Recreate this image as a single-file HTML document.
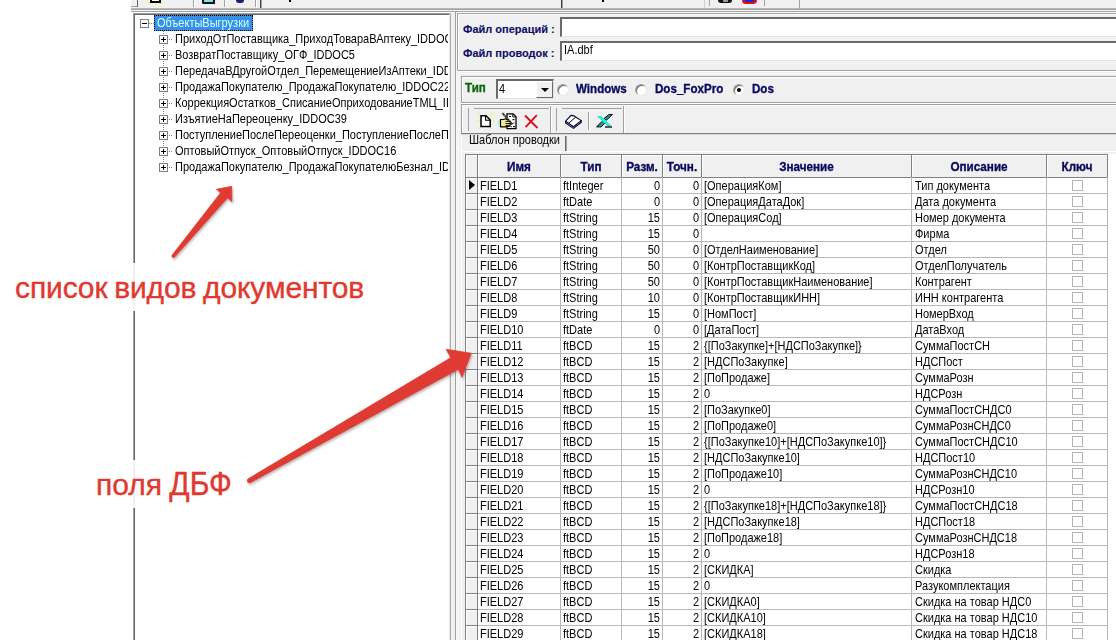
<!DOCTYPE html>
<html><head><meta charset="utf-8"><style>
*{margin:0;padding:0;box-sizing:border-box}
html,body{width:1116px;height:640px;overflow:hidden;background:#fff}
body{position:relative;font-family:"Liberation Sans",sans-serif;font-size:11px;color:#000}
.a{position:absolute}
.t{position:absolute;white-space:nowrap;line-height:16px;height:16px;transform:scaleY(1.1);transform-origin:0 12px}
.hl{position:absolute;height:1px}
.vl{position:absolute;width:1px}
.b{font-weight:bold}
.nv{color:#08085e;-webkit-text-stroke:0.3px #08085e}
</style></head><body>

<div class="a" style="left:131px;top:0;width:985px;height:9px;background:#f0f0f0"></div>
<div class="hl" style="left:131px;top:8px;width:985px;background:#b8b8b8"></div>
<div class="hl" style="left:131px;top:9px;width:985px;background:#a0a0a0"></div>
<div class="hl" style="left:131px;top:10px;width:985px;background:#fafafa"></div>
<div class="hl" style="left:131px;top:11px;width:985px;background:#a0a0a0"></div>
<div class="hl" style="left:131px;top:12px;width:985px;background:#fff"></div>
<div class="vl" style="left:193px;top:0;height:7px;background:#a0a0a0"></div>
<div class="vl" style="left:194px;top:0;height:7px;background:#fff"></div>
<div class="vl" style="left:224px;top:0;height:7px;background:#a0a0a0"></div>
<div class="vl" style="left:225px;top:0;height:7px;background:#fff"></div>
<div class="vl" style="left:255px;top:0;height:7px;background:#a0a0a0"></div>
<div class="vl" style="left:256px;top:0;height:7px;background:#fff"></div>
<div class="hl" style="left:131px;top:6px;width:7px;background:#a0a0a0"></div>
<div class="vl" style="left:260px;top:0;height:8px;background:#404040"></div>
<div class="vl" style="left:261px;top:0;height:8px;background:#a0a0a0"></div>
<div class="vl" style="left:561px;top:0;height:8px;background:#404040"></div>
<div class="vl" style="left:562px;top:0;height:8px;background:#a0a0a0"></div>
<div class="vl" style="left:137px;top:0;height:7px;background:#606060"></div>
<div class="vl" style="left:704px;top:0;height:8px;background:#d0d0d0"></div>
<div class="vl" style="left:709px;top:0;height:6px;background:#a0a0a0"></div>
<div class="vl" style="left:764px;top:0;height:6px;background:#a0a0a0"></div>
<div class="vl" style="left:799px;top:0;height:9px;background:#a0a0a0"></div>
<div class="a" style="left:147px;top:1px;width:16px;height:3px;background:#eef27a;opacity:.7;border-radius:2px"></div>
<div class="a" style="left:150px;top:0;width:11px;height:2.5px;border:2px solid #000;border-top:none;background:#fff"></div>
<div class="a" style="left:202px;top:0;width:13px;height:4px;border:2px solid #111;border-top:none;background:#7fe0e8;border-radius:0 0 1px 2px"></div>
<div class="a" style="left:236px;top:0;width:8px;height:2.5px;background:#1a1a7a;border-radius:0 0 4px 4px"></div>
<div class="a" style="left:289px;top:0;width:2px;height:2px;background:#000"></div>
<div class="a" style="left:602px;top:0;width:2px;height:1.5px;background:#000"></div>
<div class="a" style="left:718px;top:0;width:14px;height:3px;background:#111;border-radius:0 0 3px 3px"></div>
<div class="a" style="left:723px;top:0;width:5px;height:2px;background:#999"></div>
<div class="a" style="left:742px;top:0;width:15px;height:3.5px;background:#e01010;border-radius:0 0 6px 6px"></div>
<div class="a" style="left:745px;top:0;width:9px;height:2px;background:#1a2ad0"></div>
<div class="a" style="left:133px;top:13px;width:318px;height:640px;background:#fff;border-top:1px solid #a0a0a0;border-left:1px solid #a0a0a0"></div>
<div class="hl" style="left:134px;top:14px;width:316px;background:#696969"></div>
<div class="vl" style="left:134px;top:14px;height:640px;background:#696969"></div>
<div class="vl" style="left:449px;top:14px;height:640px;background:#e3e3e3"></div>
<div class="vl" style="left:450px;top:13px;height:640px;background:#b0b0b0"></div>
<div class="a" style="left:135px;top:15px;width:313px;height:630px;overflow:hidden">
<div class="a" style="left:5px;top:4px;width:9px;height:9px;border:1px solid #808080;background:#fff"></div>
<div class="a" style="left:7px;top:8px;width:5px;height:1px;background:#000"></div>
<div class="a" style="left:14px;top:8px;width:1px;height:1px;background:#808080"></div>
<div class="a" style="left:16px;top:8px;width:1px;height:1px;background:#808080"></div>
<div class="a" style="left:18px;top:8px;width:1px;height:1px;background:#808080"></div>
<div class="a" style="left:19px;top:0px;width:99px;height:16px;background:#3590e6;outline:1px dotted #000;outline-offset:-1px"></div>
<div class="t" style="left:22px;top:0px;color:#d4ffff">ОбъектыВыгрузки</div>
<div class="a" style="left:28px;top:16px;width:1px;height:1px;background:#808080"></div>
<div class="a" style="left:28px;top:18px;width:1px;height:1px;background:#808080"></div>
<div class="a" style="left:28px;top:20px;width:1px;height:1px;background:#808080"></div>
<div class="a" style="left:28px;top:22px;width:1px;height:1px;background:#808080"></div>
<div class="a" style="left:28px;top:24px;width:1px;height:1px;background:#808080"></div>
<div class="a" style="left:28px;top:26px;width:1px;height:1px;background:#808080"></div>
<div class="a" style="left:28px;top:28px;width:1px;height:1px;background:#808080"></div>
<div class="a" style="left:28px;top:30px;width:1px;height:1px;background:#808080"></div>
<div class="a" style="left:28px;top:32px;width:1px;height:1px;background:#808080"></div>
<div class="a" style="left:28px;top:34px;width:1px;height:1px;background:#808080"></div>
<div class="a" style="left:28px;top:36px;width:1px;height:1px;background:#808080"></div>
<div class="a" style="left:28px;top:38px;width:1px;height:1px;background:#808080"></div>
<div class="a" style="left:28px;top:40px;width:1px;height:1px;background:#808080"></div>
<div class="a" style="left:28px;top:42px;width:1px;height:1px;background:#808080"></div>
<div class="a" style="left:28px;top:44px;width:1px;height:1px;background:#808080"></div>
<div class="a" style="left:28px;top:46px;width:1px;height:1px;background:#808080"></div>
<div class="a" style="left:28px;top:48px;width:1px;height:1px;background:#808080"></div>
<div class="a" style="left:28px;top:50px;width:1px;height:1px;background:#808080"></div>
<div class="a" style="left:28px;top:52px;width:1px;height:1px;background:#808080"></div>
<div class="a" style="left:28px;top:54px;width:1px;height:1px;background:#808080"></div>
<div class="a" style="left:28px;top:56px;width:1px;height:1px;background:#808080"></div>
<div class="a" style="left:28px;top:58px;width:1px;height:1px;background:#808080"></div>
<div class="a" style="left:28px;top:60px;width:1px;height:1px;background:#808080"></div>
<div class="a" style="left:28px;top:62px;width:1px;height:1px;background:#808080"></div>
<div class="a" style="left:28px;top:64px;width:1px;height:1px;background:#808080"></div>
<div class="a" style="left:28px;top:66px;width:1px;height:1px;background:#808080"></div>
<div class="a" style="left:28px;top:68px;width:1px;height:1px;background:#808080"></div>
<div class="a" style="left:28px;top:70px;width:1px;height:1px;background:#808080"></div>
<div class="a" style="left:28px;top:72px;width:1px;height:1px;background:#808080"></div>
<div class="a" style="left:28px;top:74px;width:1px;height:1px;background:#808080"></div>
<div class="a" style="left:28px;top:76px;width:1px;height:1px;background:#808080"></div>
<div class="a" style="left:28px;top:78px;width:1px;height:1px;background:#808080"></div>
<div class="a" style="left:28px;top:80px;width:1px;height:1px;background:#808080"></div>
<div class="a" style="left:28px;top:82px;width:1px;height:1px;background:#808080"></div>
<div class="a" style="left:28px;top:84px;width:1px;height:1px;background:#808080"></div>
<div class="a" style="left:28px;top:86px;width:1px;height:1px;background:#808080"></div>
<div class="a" style="left:28px;top:88px;width:1px;height:1px;background:#808080"></div>
<div class="a" style="left:28px;top:90px;width:1px;height:1px;background:#808080"></div>
<div class="a" style="left:28px;top:92px;width:1px;height:1px;background:#808080"></div>
<div class="a" style="left:28px;top:94px;width:1px;height:1px;background:#808080"></div>
<div class="a" style="left:28px;top:96px;width:1px;height:1px;background:#808080"></div>
<div class="a" style="left:28px;top:98px;width:1px;height:1px;background:#808080"></div>
<div class="a" style="left:28px;top:100px;width:1px;height:1px;background:#808080"></div>
<div class="a" style="left:28px;top:102px;width:1px;height:1px;background:#808080"></div>
<div class="a" style="left:28px;top:104px;width:1px;height:1px;background:#808080"></div>
<div class="a" style="left:28px;top:106px;width:1px;height:1px;background:#808080"></div>
<div class="a" style="left:28px;top:108px;width:1px;height:1px;background:#808080"></div>
<div class="a" style="left:28px;top:110px;width:1px;height:1px;background:#808080"></div>
<div class="a" style="left:28px;top:112px;width:1px;height:1px;background:#808080"></div>
<div class="a" style="left:28px;top:114px;width:1px;height:1px;background:#808080"></div>
<div class="a" style="left:28px;top:116px;width:1px;height:1px;background:#808080"></div>
<div class="a" style="left:28px;top:118px;width:1px;height:1px;background:#808080"></div>
<div class="a" style="left:28px;top:120px;width:1px;height:1px;background:#808080"></div>
<div class="a" style="left:28px;top:122px;width:1px;height:1px;background:#808080"></div>
<div class="a" style="left:28px;top:124px;width:1px;height:1px;background:#808080"></div>
<div class="a" style="left:28px;top:126px;width:1px;height:1px;background:#808080"></div>
<div class="a" style="left:28px;top:128px;width:1px;height:1px;background:#808080"></div>
<div class="a" style="left:28px;top:130px;width:1px;height:1px;background:#808080"></div>
<div class="a" style="left:28px;top:132px;width:1px;height:1px;background:#808080"></div>
<div class="a" style="left:28px;top:134px;width:1px;height:1px;background:#808080"></div>
<div class="a" style="left:28px;top:136px;width:1px;height:1px;background:#808080"></div>
<div class="a" style="left:28px;top:138px;width:1px;height:1px;background:#808080"></div>
<div class="a" style="left:28px;top:140px;width:1px;height:1px;background:#808080"></div>
<div class="a" style="left:28px;top:142px;width:1px;height:1px;background:#808080"></div>
<div class="a" style="left:28px;top:144px;width:1px;height:1px;background:#808080"></div>
<div class="a" style="left:28px;top:146px;width:1px;height:1px;background:#808080"></div>
<div class="a" style="left:28px;top:148px;width:1px;height:1px;background:#808080"></div>
<div class="a" style="left:28px;top:150px;width:1px;height:1px;background:#808080"></div>
<div class="a" style="left:28px;top:152px;width:1px;height:1px;background:#808080"></div>
<div class="a" style="left:24px;top:20px;width:9px;height:9px;border:1px solid #808080;background:#fff"></div>
<div class="a" style="left:26px;top:24px;width:5px;height:1px;background:#000"></div>
<div class="a" style="left:28px;top:22px;width:1px;height:5px;background:#000"></div>
<div class="a" style="left:34px;top:24px;width:1px;height:1px;background:#808080"></div>
<div class="a" style="left:36px;top:24px;width:1px;height:1px;background:#808080"></div>
<div class="t" style="left:40px;top:16px">ПриходОтПоставщика_ПриходТовараВАптеку_IDDOC1</div>
<div class="a" style="left:24px;top:36px;width:9px;height:9px;border:1px solid #808080;background:#fff"></div>
<div class="a" style="left:26px;top:40px;width:5px;height:1px;background:#000"></div>
<div class="a" style="left:28px;top:38px;width:1px;height:5px;background:#000"></div>
<div class="a" style="left:34px;top:40px;width:1px;height:1px;background:#808080"></div>
<div class="a" style="left:36px;top:40px;width:1px;height:1px;background:#808080"></div>
<div class="t" style="left:40px;top:32px">ВозвратПоставщику_ОГФ_IDDOC5</div>
<div class="a" style="left:24px;top:52px;width:9px;height:9px;border:1px solid #808080;background:#fff"></div>
<div class="a" style="left:26px;top:56px;width:5px;height:1px;background:#000"></div>
<div class="a" style="left:28px;top:54px;width:1px;height:5px;background:#000"></div>
<div class="a" style="left:34px;top:56px;width:1px;height:1px;background:#808080"></div>
<div class="a" style="left:36px;top:56px;width:1px;height:1px;background:#808080"></div>
<div class="t" style="left:40px;top:48px">ПередачаВДругойОтдел_ПеремещениеИзАптеки_IDDOC</div>
<div class="a" style="left:24px;top:68px;width:9px;height:9px;border:1px solid #808080;background:#fff"></div>
<div class="a" style="left:26px;top:72px;width:5px;height:1px;background:#000"></div>
<div class="a" style="left:28px;top:70px;width:1px;height:5px;background:#000"></div>
<div class="a" style="left:34px;top:72px;width:1px;height:1px;background:#808080"></div>
<div class="a" style="left:36px;top:72px;width:1px;height:1px;background:#808080"></div>
<div class="t" style="left:40px;top:64px">ПродажаПокупателю_ПродажаПокупателю_IDDOC22</div>
<div class="a" style="left:24px;top:84px;width:9px;height:9px;border:1px solid #808080;background:#fff"></div>
<div class="a" style="left:26px;top:88px;width:5px;height:1px;background:#000"></div>
<div class="a" style="left:28px;top:86px;width:1px;height:5px;background:#000"></div>
<div class="a" style="left:34px;top:88px;width:1px;height:1px;background:#808080"></div>
<div class="a" style="left:36px;top:88px;width:1px;height:1px;background:#808080"></div>
<div class="t" style="left:40px;top:80px">КоррекцияОстатков_СписаниеОприходованиеТМЦ_IDDOC</div>
<div class="a" style="left:24px;top:100px;width:9px;height:9px;border:1px solid #808080;background:#fff"></div>
<div class="a" style="left:26px;top:104px;width:5px;height:1px;background:#000"></div>
<div class="a" style="left:28px;top:102px;width:1px;height:5px;background:#000"></div>
<div class="a" style="left:34px;top:104px;width:1px;height:1px;background:#808080"></div>
<div class="a" style="left:36px;top:104px;width:1px;height:1px;background:#808080"></div>
<div class="t" style="left:40px;top:96px">ИзъятиеНаПереоценку_IDDOC39</div>
<div class="a" style="left:24px;top:116px;width:9px;height:9px;border:1px solid #808080;background:#fff"></div>
<div class="a" style="left:26px;top:120px;width:5px;height:1px;background:#000"></div>
<div class="a" style="left:28px;top:118px;width:1px;height:5px;background:#000"></div>
<div class="a" style="left:34px;top:120px;width:1px;height:1px;background:#808080"></div>
<div class="a" style="left:36px;top:120px;width:1px;height:1px;background:#808080"></div>
<div class="t" style="left:40px;top:112px">ПоступлениеПослеПереоценки_ПоступлениеПослеПереоценки</div>
<div class="a" style="left:24px;top:132px;width:9px;height:9px;border:1px solid #808080;background:#fff"></div>
<div class="a" style="left:26px;top:136px;width:5px;height:1px;background:#000"></div>
<div class="a" style="left:28px;top:134px;width:1px;height:5px;background:#000"></div>
<div class="a" style="left:34px;top:136px;width:1px;height:1px;background:#808080"></div>
<div class="a" style="left:36px;top:136px;width:1px;height:1px;background:#808080"></div>
<div class="t" style="left:40px;top:128px">ОптовыйОтпуск_ОптовыйОтпуск_IDDOC16</div>
<div class="a" style="left:24px;top:148px;width:9px;height:9px;border:1px solid #808080;background:#fff"></div>
<div class="a" style="left:26px;top:152px;width:5px;height:1px;background:#000"></div>
<div class="a" style="left:28px;top:150px;width:1px;height:5px;background:#000"></div>
<div class="a" style="left:34px;top:152px;width:1px;height:1px;background:#808080"></div>
<div class="a" style="left:36px;top:152px;width:1px;height:1px;background:#808080"></div>
<div class="t" style="left:40px;top:144px">ПродажаПокупателю_ПродажаПокупателюБезнал_IDDOC</div>
</div>
<div class="a" style="left:451px;top:13px;width:665px;height:627px;background:#f0f0f0"></div>
<div class="vl" style="left:455px;top:11px;height:629px;background:#a0a0a0"></div>
<div class="vl" style="left:456px;top:12px;height:628px;background:#fafafa"></div>
<div class="vl" style="left:457px;top:13px;height:58px;background:#a0a0a0"></div>
<div class="hl" style="left:457px;top:13px;width:659px;background:#a0a0a0"></div>
<div class="hl" style="left:458px;top:14px;width:658px;background:#fff"></div>
<div class="vl" style="left:458px;top:14px;height:56px;background:#fff"></div>
<div class="hl" style="left:457px;top:70px;width:659px;background:#a0a0a0"></div>
<div class="hl" style="left:457px;top:71px;width:659px;background:#fff"></div>
<div class="t b" style="left:463px;top:21px;transform:none;color:#0c0c66;-webkit-text-stroke:0.1px #0c0c66">Файл операций :</div>
<div class="t b" style="left:463px;top:45px;transform:none;color:#0c0c66;-webkit-text-stroke:0.1px #0c0c66">Файл проводок :</div>
<div class="a" style="left:560px;top:17px;width:600px;height:20px;background:#fff;border-top:2px solid #6a6a6a;border-left:2px solid #6a6a6a;border-bottom:1px solid #e3e3e3"></div>
<div class="a" style="left:560px;top:41px;width:600px;height:20px;background:#fff;border-top:2px solid #6a6a6a;border-left:2px solid #6a6a6a;border-bottom:1px solid #e3e3e3"></div>
<div class="t" style="left:564px;top:42px">IA.dbf</div>
<div class="hl" style="left:458px;top:73px;width:658px;background:#fafafa"></div>
<div class="vl" style="left:458px;top:73px;height:567px;background:#fafafa"></div>
<div class="hl" style="left:461px;top:76px;width:655px;background:#a0a0a0"></div>
<div class="hl" style="left:462px;top:77px;width:654px;background:#fff"></div>
<div class="vl" style="left:461px;top:76px;height:27px;background:#a0a0a0"></div>
<div class="vl" style="left:462px;top:77px;height:25px;background:#fff"></div>
<div class="hl" style="left:461px;top:102px;width:655px;background:#a0a0a0"></div>
<div class="hl" style="left:461px;top:103px;width:655px;background:#fff"></div>
<div class="t b" style="left:465px;top:80px;color:#0b650b;-webkit-text-stroke:0.3px #0b650b;font-size:11.6px">Тип</div>
<div class="a" style="left:496px;top:79px;width:58px;height:20px;background:#fff;border-top:2px solid #6a6a6a;border-left:2px solid #6a6a6a;border-right:1px solid #e3e3e3;border-bottom:1px solid #e3e3e3"></div>
<div class="t" style="left:499px;top:81px">4</div>
<div class="a" style="left:536px;top:81px;width:17px;height:17px;background:#f0f0f0;border-right:1px solid #696969;border-bottom:1px solid #696969;border-left:1px solid #fff;border-top:1px solid #fff"></div>
<div class="a" style="left:541px;top:88px;width:0;height:0;border-left:4px solid transparent;border-right:4px solid transparent;border-top:4px solid #000"></div>
<div class="a" style="left:557px;top:84px;width:12px;height:12px;border-radius:50%;background:#fff;border:1px solid;border-color:#a0a0a0 #e8e8e8 #e8e8e8 #a0a0a0;box-shadow:inset 1px 1px 0 #6a6a6a"></div>
<div class="t b nv" style="left:576px;top:81px;font-size:11.6px">Windows</div>
<div class="a" style="left:635px;top:84px;width:12px;height:12px;border-radius:50%;background:#fff;border:1px solid;border-color:#a0a0a0 #e8e8e8 #e8e8e8 #a0a0a0;box-shadow:inset 1px 1px 0 #6a6a6a"></div>
<div class="t b nv" style="left:655px;top:81px;font-size:11.6px">Dos_FoxPro</div>
<div class="a" style="left:733px;top:84px;width:12px;height:12px;border-radius:50%;background:#fff;border:1px solid;border-color:#a0a0a0 #e8e8e8 #e8e8e8 #a0a0a0;box-shadow:inset 1px 1px 0 #6a6a6a"></div>
<div class="a" style="left:737px;top:88px;width:4px;height:4px;border-radius:50%;background:#000"></div>
<div class="t b nv" style="left:752px;top:81px;font-size:11.6px">Dos</div>
<div class="hl" style="left:461px;top:104px;width:655px;background:#a0a0a0"></div>
<div class="hl" style="left:462px;top:105px;width:654px;background:#fff"></div>
<div class="vl" style="left:461px;top:104px;height:30px;background:#a0a0a0"></div>
<div class="vl" style="left:462px;top:105px;height:28px;background:#fff"></div>
<div class="hl" style="left:461px;top:133px;width:655px;background:#808080"></div>
<div class="hl" style="left:461px;top:134px;width:655px;background:#d8d8d8"></div>
<div class="vl" style="left:550px;top:106px;height:27px;background:#a0a0a0"></div>
<div class="vl" style="left:551px;top:106px;height:27px;background:#fff"></div>
<div class="vl" style="left:468px;top:108px;height:23px;background:#a0a0a0"></div>
<div class="hl" style="left:474px;top:108px;width:75px;background:#a0a0a0"></div>
<div class="vl" style="left:556px;top:108px;height:23px;background:#a0a0a0"></div>
<div class="hl" style="left:562px;top:108px;width:60px;background:#a0a0a0"></div>
<div class="vl" style="left:623px;top:106px;height:27px;background:#a0a0a0"></div>
<div class="vl" style="left:624px;top:106px;height:27px;background:#fff"></div>
<div class="vl" style="left:588px;top:112px;height:18px;background:#a0a0a0"></div>
<div class="vl" style="left:589px;top:112px;height:18px;background:#fff"></div>
<svg class="a" style="left:0;top:0" width="640" height="140" viewBox="0 0 640 140">
<g stroke="#eef27a" stroke-width="1.6" stroke-linecap="round" opacity=".9">
<line x1="476.5" y1="121" x2="479" y2="121"/><line x1="491.5" y1="121" x2="494" y2="121"/>
<line x1="478" y1="113" x2="479.5" y2="114.5"/><line x1="493" y1="112.5" x2="491" y2="115"/>
<line x1="479" y1="128.5" x2="480" y2="127.5"/><line x1="491.5" y1="128.5" x2="490.5" y2="127.5"/>
</g>
<path d="M481 115.8 H486 L490.2 120 V126.4 H481 Z" fill="#fff" stroke="#000" stroke-width="1.5" stroke-linejoin="miter"/>
<path d="M485.6 115.8 V120.2 H490.2" fill="none" stroke="#000" stroke-width="1.1"/>
<path d="M507 113.8 H513 L516 116.8 V128.6 H507 Z" fill="#fff" stroke="#000" stroke-width="1.3"/>
<path d="M512.8 113.8 V117 H516" fill="none" stroke="#000" stroke-width="0.9"/>
<g fill="#111"><rect x="509" y="116" width="2" height="1"/><rect x="512.5" y="119" width="2" height="1.2"/><rect x="513.5" y="122.5" width="1" height="1"/><rect x="510.5" y="126" width="1.2" height="1.2"/><rect x="513" y="126" width="2" height="1.2"/></g>
<path d="M500.5 119.5 H503.5 L505.5 118.8 L509.5 120.8 L511 123 L509.5 126.2 L505 126.8 H500.5 Z" fill="#f2ee8a" stroke="#000" stroke-width="1.2" stroke-linejoin="round"/>
<path d="M505.5 121.4 H510.2 M505.5 123.5 H510.8 M505.5 125.4 H509.2" stroke="#000" stroke-width="0.9"/>
<rect x="498.6" y="120.5" width="1.2" height="5" fill="#7fe0e8"/>
<line x1="502.3" y1="113" x2="512.5" y2="124.3" stroke="#111" stroke-width="1.8"/>
<line x1="502.3" y1="113" x2="512.5" y2="124.3" stroke="#e8e070" stroke-width="0.8" stroke-dasharray="1.2 1.2"/>
<path d="M525 115.5 L537.5 128 M536.8 115.2 L525.6 127.2" stroke="#dc0a1e" stroke-width="1.8"/>
<path d="M565.6 121.2 V123 L573.5 128.4 L581.3 122.2 V120.6" fill="#fff" stroke="#000040" stroke-width="1.1" stroke-linejoin="round"/>
<path d="M567 123.6 L573.5 127.6 L580.5 122.3" fill="none" stroke="#8080c0" stroke-width="0.6" stroke-dasharray="1 1"/>
<path d="M565.6 121.2 L571 115.4 L573.8 115.8 L581.2 120.6 L573.5 126.7 Z" fill="#fff" stroke="#000030" stroke-width="1.1" stroke-linejoin="round"/>
<line x1="569.2" y1="122.8" x2="575.6" y2="117.2" stroke="#000030" stroke-width="1"/>
<path d="M596.5 126.8 L602.5 121 L605 123 L601 127 Z" fill="#1f9a88" stroke="#000" stroke-width="0.9"/>
<path d="M604 118.5 L609 114.5 H612.5 L606.5 120.2 Z" fill="#1f9a88" stroke="#000" stroke-width="0.9"/>
<path d="M596.8 116 H601 L612 126.3 H607.5 Z" fill="#2ee6da"/>
<path d="M605 127 H612" stroke="#000" stroke-width="1.3"/>
</svg>
<div class="t" style="left:469px;top:132px">Шаблон проводки</div>
<div class="vl" style="left:565px;top:136px;height:15px;background:#6a6a6a"></div>
<div class="vl" style="left:566px;top:136px;height:15px;background:#a0a0a0"></div>
<div class="hl" style="left:461px;top:151px;width:655px;background:#fff"></div>
<div class="vl" style="left:461px;top:135px;height:505px;background:#fff"></div>
<div class="a" style="left:465px;top:154px;width:651px;height:486px;background:#fff"></div>
<div class="a" style="left:466px;top:155px;width:641px;height:22px;background:#f0f0f0"></div>
<div class="a" style="left:466px;top:178px;width:11px;height:462px;background:#f0f0f0"></div>
<div class="hl" style="left:466px;top:155px;width:641px;background:#fff"></div>
<div class="vl" style="left:466px;top:155px;height:22px;background:#fff"></div>
<div class="vl" style="left:478px;top:155px;height:22px;background:#fff"></div>
<div class="vl" style="left:561px;top:155px;height:22px;background:#fff"></div>
<div class="vl" style="left:622px;top:155px;height:22px;background:#fff"></div>
<div class="vl" style="left:663px;top:155px;height:22px;background:#fff"></div>
<div class="vl" style="left:702px;top:155px;height:22px;background:#fff"></div>
<div class="vl" style="left:912px;top:155px;height:22px;background:#fff"></div>
<div class="vl" style="left:1047px;top:155px;height:22px;background:#fff"></div>
<div class="vl" style="left:466px;top:178px;height:462px;background:#fff"></div>
<div class="hl" style="left:466px;top:178px;width:11px;background:#fff"></div>
<div class="hl" style="left:466px;top:194px;width:11px;background:#fff"></div>
<div class="hl" style="left:466px;top:210px;width:11px;background:#fff"></div>
<div class="hl" style="left:466px;top:226px;width:11px;background:#fff"></div>
<div class="hl" style="left:466px;top:242px;width:11px;background:#fff"></div>
<div class="hl" style="left:466px;top:258px;width:11px;background:#fff"></div>
<div class="hl" style="left:466px;top:274px;width:11px;background:#fff"></div>
<div class="hl" style="left:466px;top:290px;width:11px;background:#fff"></div>
<div class="hl" style="left:466px;top:306px;width:11px;background:#fff"></div>
<div class="hl" style="left:466px;top:322px;width:11px;background:#fff"></div>
<div class="hl" style="left:466px;top:338px;width:11px;background:#fff"></div>
<div class="hl" style="left:466px;top:354px;width:11px;background:#fff"></div>
<div class="hl" style="left:466px;top:370px;width:11px;background:#fff"></div>
<div class="hl" style="left:466px;top:386px;width:11px;background:#fff"></div>
<div class="hl" style="left:466px;top:402px;width:11px;background:#fff"></div>
<div class="hl" style="left:466px;top:418px;width:11px;background:#fff"></div>
<div class="hl" style="left:466px;top:434px;width:11px;background:#fff"></div>
<div class="hl" style="left:466px;top:450px;width:11px;background:#fff"></div>
<div class="hl" style="left:466px;top:466px;width:11px;background:#fff"></div>
<div class="hl" style="left:466px;top:482px;width:11px;background:#fff"></div>
<div class="hl" style="left:466px;top:498px;width:11px;background:#fff"></div>
<div class="hl" style="left:466px;top:514px;width:11px;background:#fff"></div>
<div class="hl" style="left:466px;top:530px;width:11px;background:#fff"></div>
<div class="hl" style="left:466px;top:546px;width:11px;background:#fff"></div>
<div class="hl" style="left:466px;top:562px;width:11px;background:#fff"></div>
<div class="hl" style="left:466px;top:578px;width:11px;background:#fff"></div>
<div class="hl" style="left:466px;top:594px;width:11px;background:#fff"></div>
<div class="hl" style="left:466px;top:610px;width:11px;background:#fff"></div>
<div class="hl" style="left:466px;top:626px;width:11px;background:#fff"></div>
<div class="vl" style="left:465px;top:154px;height:486px;background:#808080"></div>
<div class="hl" style="left:465px;top:154px;width:643px;background:#808080"></div>
<div class="hl" style="left:465px;top:177px;width:643px;background:#808080"></div>
<div class="vl" style="left:477px;top:154px;height:24px;background:#808080"></div>
<div class="vl" style="left:560px;top:154px;height:24px;background:#808080"></div>
<div class="vl" style="left:621px;top:154px;height:24px;background:#808080"></div>
<div class="vl" style="left:662px;top:154px;height:24px;background:#808080"></div>
<div class="vl" style="left:701px;top:154px;height:24px;background:#808080"></div>
<div class="vl" style="left:911px;top:154px;height:24px;background:#808080"></div>
<div class="vl" style="left:1046px;top:154px;height:24px;background:#808080"></div>
<div class="vl" style="left:1107px;top:154px;height:24px;background:#808080"></div>
<div class="vl" style="left:477px;top:177px;height:463px;background:#808080"></div>
<div class="vl" style="left:560px;top:177px;height:463px;background:#b8b8b8"></div>
<div class="vl" style="left:621px;top:177px;height:463px;background:#b8b8b8"></div>
<div class="vl" style="left:662px;top:177px;height:463px;background:#b8b8b8"></div>
<div class="vl" style="left:701px;top:177px;height:463px;background:#b8b8b8"></div>
<div class="vl" style="left:911px;top:177px;height:463px;background:#b8b8b8"></div>
<div class="vl" style="left:1046px;top:177px;height:463px;background:#b8b8b8"></div>
<div class="vl" style="left:1107px;top:177px;height:463px;background:#b8b8b8"></div>
<div class="t b nv" style="left:478px;top:159px;width:82px;text-align:center;font-size:11.7px">Имя</div>
<div class="t b nv" style="left:561px;top:159px;width:60px;text-align:center;font-size:11.7px">Тип</div>
<div class="t b nv" style="left:622px;top:159px;width:40px;text-align:center;font-size:11.7px">Разм.</div>
<div class="t b nv" style="left:663px;top:159px;width:38px;text-align:center;font-size:11.7px">Точн.</div>
<div class="t b nv" style="left:702px;top:159px;width:209px;text-align:center;font-size:11.7px">Значение</div>
<div class="t b nv" style="left:912px;top:159px;width:134px;text-align:center;font-size:11.7px">Описание</div>
<div class="t b nv" style="left:1047px;top:159px;width:60px;text-align:center;font-size:11.7px">Ключ</div>
<div class="hl" style="left:466px;top:193px;width:11px;background:#808080"></div>
<div class="hl" style="left:478px;top:193px;width:630px;background:#b8b8b8"></div>
<div class="t" style="left:480px;top:178px">FIELD1</div>
<div class="t" style="left:563px;top:178px">ftInteger</div>
<div class="t" style="left:622px;top:178px;width:38px;text-align:right">0</div>
<div class="t" style="left:663px;top:178px;width:36px;text-align:right">0</div>
<div class="t" style="left:704px;top:178px">[ОперацияКом]</div>
<div class="t" style="left:915px;top:178px">Тип документа</div>
<div class="a" style="left:1072px;top:180px;width:11px;height:11px;border:1px solid #b4b4b4;background:#fff"></div>
<div class="hl" style="left:466px;top:209px;width:11px;background:#808080"></div>
<div class="hl" style="left:478px;top:209px;width:630px;background:#b8b8b8"></div>
<div class="t" style="left:480px;top:194px">FIELD2</div>
<div class="t" style="left:563px;top:194px">ftDate</div>
<div class="t" style="left:622px;top:194px;width:38px;text-align:right">0</div>
<div class="t" style="left:663px;top:194px;width:36px;text-align:right">0</div>
<div class="t" style="left:704px;top:194px">[ОперацияДатаДок]</div>
<div class="t" style="left:915px;top:194px">Дата документа</div>
<div class="a" style="left:1072px;top:196px;width:11px;height:11px;border:1px solid #b4b4b4;background:#fff"></div>
<div class="hl" style="left:466px;top:225px;width:11px;background:#808080"></div>
<div class="hl" style="left:478px;top:225px;width:630px;background:#b8b8b8"></div>
<div class="t" style="left:480px;top:210px">FIELD3</div>
<div class="t" style="left:563px;top:210px">ftString</div>
<div class="t" style="left:622px;top:210px;width:38px;text-align:right">15</div>
<div class="t" style="left:663px;top:210px;width:36px;text-align:right">0</div>
<div class="t" style="left:704px;top:210px">[ОперацияСод]</div>
<div class="t" style="left:915px;top:210px">Номер документа</div>
<div class="a" style="left:1072px;top:212px;width:11px;height:11px;border:1px solid #b4b4b4;background:#fff"></div>
<div class="hl" style="left:466px;top:241px;width:11px;background:#808080"></div>
<div class="hl" style="left:478px;top:241px;width:630px;background:#b8b8b8"></div>
<div class="t" style="left:480px;top:226px">FIELD4</div>
<div class="t" style="left:563px;top:226px">ftString</div>
<div class="t" style="left:622px;top:226px;width:38px;text-align:right">15</div>
<div class="t" style="left:663px;top:226px;width:36px;text-align:right">0</div>
<div class="t" style="left:704px;top:226px"></div>
<div class="t" style="left:915px;top:226px">Фирма</div>
<div class="a" style="left:1072px;top:228px;width:11px;height:11px;border:1px solid #b4b4b4;background:#fff"></div>
<div class="hl" style="left:466px;top:257px;width:11px;background:#808080"></div>
<div class="hl" style="left:478px;top:257px;width:630px;background:#b8b8b8"></div>
<div class="t" style="left:480px;top:242px">FIELD5</div>
<div class="t" style="left:563px;top:242px">ftString</div>
<div class="t" style="left:622px;top:242px;width:38px;text-align:right">50</div>
<div class="t" style="left:663px;top:242px;width:36px;text-align:right">0</div>
<div class="t" style="left:704px;top:242px">[ОтделНаименование]</div>
<div class="t" style="left:915px;top:242px">Отдел</div>
<div class="a" style="left:1072px;top:244px;width:11px;height:11px;border:1px solid #b4b4b4;background:#fff"></div>
<div class="hl" style="left:466px;top:273px;width:11px;background:#808080"></div>
<div class="hl" style="left:478px;top:273px;width:630px;background:#b8b8b8"></div>
<div class="t" style="left:480px;top:258px">FIELD6</div>
<div class="t" style="left:563px;top:258px">ftString</div>
<div class="t" style="left:622px;top:258px;width:38px;text-align:right">50</div>
<div class="t" style="left:663px;top:258px;width:36px;text-align:right">0</div>
<div class="t" style="left:704px;top:258px">[КонтрПоставщикКод]</div>
<div class="t" style="left:915px;top:258px">ОтделПолучатель</div>
<div class="a" style="left:1072px;top:260px;width:11px;height:11px;border:1px solid #b4b4b4;background:#fff"></div>
<div class="hl" style="left:466px;top:289px;width:11px;background:#808080"></div>
<div class="hl" style="left:478px;top:289px;width:630px;background:#b8b8b8"></div>
<div class="t" style="left:480px;top:274px">FIELD7</div>
<div class="t" style="left:563px;top:274px">ftString</div>
<div class="t" style="left:622px;top:274px;width:38px;text-align:right">50</div>
<div class="t" style="left:663px;top:274px;width:36px;text-align:right">0</div>
<div class="t" style="left:704px;top:274px">[КонтрПоставщикНаименование]</div>
<div class="t" style="left:915px;top:274px">Контрагент</div>
<div class="a" style="left:1072px;top:276px;width:11px;height:11px;border:1px solid #b4b4b4;background:#fff"></div>
<div class="hl" style="left:466px;top:305px;width:11px;background:#808080"></div>
<div class="hl" style="left:478px;top:305px;width:630px;background:#b8b8b8"></div>
<div class="t" style="left:480px;top:290px">FIELD8</div>
<div class="t" style="left:563px;top:290px">ftString</div>
<div class="t" style="left:622px;top:290px;width:38px;text-align:right">10</div>
<div class="t" style="left:663px;top:290px;width:36px;text-align:right">0</div>
<div class="t" style="left:704px;top:290px">[КонтрПоставщикИНН]</div>
<div class="t" style="left:915px;top:290px">ИНН контрагента</div>
<div class="a" style="left:1072px;top:292px;width:11px;height:11px;border:1px solid #b4b4b4;background:#fff"></div>
<div class="hl" style="left:466px;top:321px;width:11px;background:#808080"></div>
<div class="hl" style="left:478px;top:321px;width:630px;background:#b8b8b8"></div>
<div class="t" style="left:480px;top:306px">FIELD9</div>
<div class="t" style="left:563px;top:306px">ftString</div>
<div class="t" style="left:622px;top:306px;width:38px;text-align:right">15</div>
<div class="t" style="left:663px;top:306px;width:36px;text-align:right">0</div>
<div class="t" style="left:704px;top:306px">[НомПост]</div>
<div class="t" style="left:915px;top:306px">НомерВход</div>
<div class="a" style="left:1072px;top:308px;width:11px;height:11px;border:1px solid #b4b4b4;background:#fff"></div>
<div class="hl" style="left:466px;top:337px;width:11px;background:#808080"></div>
<div class="hl" style="left:478px;top:337px;width:630px;background:#b8b8b8"></div>
<div class="t" style="left:480px;top:322px">FIELD10</div>
<div class="t" style="left:563px;top:322px">ftDate</div>
<div class="t" style="left:622px;top:322px;width:38px;text-align:right">0</div>
<div class="t" style="left:663px;top:322px;width:36px;text-align:right">0</div>
<div class="t" style="left:704px;top:322px">[ДатаПост]</div>
<div class="t" style="left:915px;top:322px">ДатаВход</div>
<div class="a" style="left:1072px;top:324px;width:11px;height:11px;border:1px solid #b4b4b4;background:#fff"></div>
<div class="hl" style="left:466px;top:353px;width:11px;background:#808080"></div>
<div class="hl" style="left:478px;top:353px;width:630px;background:#b8b8b8"></div>
<div class="t" style="left:480px;top:338px">FIELD11</div>
<div class="t" style="left:563px;top:338px">ftBCD</div>
<div class="t" style="left:622px;top:338px;width:38px;text-align:right">15</div>
<div class="t" style="left:663px;top:338px;width:36px;text-align:right">2</div>
<div class="t" style="left:704px;top:338px">{[ПоЗакупке]+[НДСПоЗакупке]}</div>
<div class="t" style="left:915px;top:338px">СуммаПостСН</div>
<div class="a" style="left:1072px;top:340px;width:11px;height:11px;border:1px solid #b4b4b4;background:#fff"></div>
<div class="hl" style="left:466px;top:369px;width:11px;background:#808080"></div>
<div class="hl" style="left:478px;top:369px;width:630px;background:#b8b8b8"></div>
<div class="t" style="left:480px;top:354px">FIELD12</div>
<div class="t" style="left:563px;top:354px">ftBCD</div>
<div class="t" style="left:622px;top:354px;width:38px;text-align:right">15</div>
<div class="t" style="left:663px;top:354px;width:36px;text-align:right">2</div>
<div class="t" style="left:704px;top:354px">[НДСПоЗакупке]</div>
<div class="t" style="left:915px;top:354px">НДСПост</div>
<div class="a" style="left:1072px;top:356px;width:11px;height:11px;border:1px solid #b4b4b4;background:#fff"></div>
<div class="hl" style="left:466px;top:385px;width:11px;background:#808080"></div>
<div class="hl" style="left:478px;top:385px;width:630px;background:#b8b8b8"></div>
<div class="t" style="left:480px;top:370px">FIELD13</div>
<div class="t" style="left:563px;top:370px">ftBCD</div>
<div class="t" style="left:622px;top:370px;width:38px;text-align:right">15</div>
<div class="t" style="left:663px;top:370px;width:36px;text-align:right">2</div>
<div class="t" style="left:704px;top:370px">[ПоПродаже]</div>
<div class="t" style="left:915px;top:370px">СуммаРозн</div>
<div class="a" style="left:1072px;top:372px;width:11px;height:11px;border:1px solid #b4b4b4;background:#fff"></div>
<div class="hl" style="left:466px;top:401px;width:11px;background:#808080"></div>
<div class="hl" style="left:478px;top:401px;width:630px;background:#b8b8b8"></div>
<div class="t" style="left:480px;top:386px">FIELD14</div>
<div class="t" style="left:563px;top:386px">ftBCD</div>
<div class="t" style="left:622px;top:386px;width:38px;text-align:right">15</div>
<div class="t" style="left:663px;top:386px;width:36px;text-align:right">2</div>
<div class="t" style="left:704px;top:386px">0</div>
<div class="t" style="left:915px;top:386px">НДСРозн</div>
<div class="a" style="left:1072px;top:388px;width:11px;height:11px;border:1px solid #b4b4b4;background:#fff"></div>
<div class="hl" style="left:466px;top:417px;width:11px;background:#808080"></div>
<div class="hl" style="left:478px;top:417px;width:630px;background:#b8b8b8"></div>
<div class="t" style="left:480px;top:402px">FIELD15</div>
<div class="t" style="left:563px;top:402px">ftBCD</div>
<div class="t" style="left:622px;top:402px;width:38px;text-align:right">15</div>
<div class="t" style="left:663px;top:402px;width:36px;text-align:right">2</div>
<div class="t" style="left:704px;top:402px">[ПоЗакупке0]</div>
<div class="t" style="left:915px;top:402px">СуммаПостСНДС0</div>
<div class="a" style="left:1072px;top:404px;width:11px;height:11px;border:1px solid #b4b4b4;background:#fff"></div>
<div class="hl" style="left:466px;top:433px;width:11px;background:#808080"></div>
<div class="hl" style="left:478px;top:433px;width:630px;background:#b8b8b8"></div>
<div class="t" style="left:480px;top:418px">FIELD16</div>
<div class="t" style="left:563px;top:418px">ftBCD</div>
<div class="t" style="left:622px;top:418px;width:38px;text-align:right">15</div>
<div class="t" style="left:663px;top:418px;width:36px;text-align:right">2</div>
<div class="t" style="left:704px;top:418px">[ПоПродаже0]</div>
<div class="t" style="left:915px;top:418px">СуммаРознСНДС0</div>
<div class="a" style="left:1072px;top:420px;width:11px;height:11px;border:1px solid #b4b4b4;background:#fff"></div>
<div class="hl" style="left:466px;top:449px;width:11px;background:#808080"></div>
<div class="hl" style="left:478px;top:449px;width:630px;background:#b8b8b8"></div>
<div class="t" style="left:480px;top:434px">FIELD17</div>
<div class="t" style="left:563px;top:434px">ftBCD</div>
<div class="t" style="left:622px;top:434px;width:38px;text-align:right">15</div>
<div class="t" style="left:663px;top:434px;width:36px;text-align:right">2</div>
<div class="t" style="left:704px;top:434px">{[ПоЗакупке10]+[НДСПоЗакупке10]}</div>
<div class="t" style="left:915px;top:434px">СуммаПостСНДС10</div>
<div class="a" style="left:1072px;top:436px;width:11px;height:11px;border:1px solid #b4b4b4;background:#fff"></div>
<div class="hl" style="left:466px;top:465px;width:11px;background:#808080"></div>
<div class="hl" style="left:478px;top:465px;width:630px;background:#b8b8b8"></div>
<div class="t" style="left:480px;top:450px">FIELD18</div>
<div class="t" style="left:563px;top:450px">ftBCD</div>
<div class="t" style="left:622px;top:450px;width:38px;text-align:right">15</div>
<div class="t" style="left:663px;top:450px;width:36px;text-align:right">2</div>
<div class="t" style="left:704px;top:450px">[НДСПоЗакупке10]</div>
<div class="t" style="left:915px;top:450px">НДСПост10</div>
<div class="a" style="left:1072px;top:452px;width:11px;height:11px;border:1px solid #b4b4b4;background:#fff"></div>
<div class="hl" style="left:466px;top:481px;width:11px;background:#808080"></div>
<div class="hl" style="left:478px;top:481px;width:630px;background:#b8b8b8"></div>
<div class="t" style="left:480px;top:466px">FIELD19</div>
<div class="t" style="left:563px;top:466px">ftBCD</div>
<div class="t" style="left:622px;top:466px;width:38px;text-align:right">15</div>
<div class="t" style="left:663px;top:466px;width:36px;text-align:right">2</div>
<div class="t" style="left:704px;top:466px">[ПоПродаже10]</div>
<div class="t" style="left:915px;top:466px">СуммаРознСНДС10</div>
<div class="a" style="left:1072px;top:468px;width:11px;height:11px;border:1px solid #b4b4b4;background:#fff"></div>
<div class="hl" style="left:466px;top:497px;width:11px;background:#808080"></div>
<div class="hl" style="left:478px;top:497px;width:630px;background:#b8b8b8"></div>
<div class="t" style="left:480px;top:482px">FIELD20</div>
<div class="t" style="left:563px;top:482px">ftBCD</div>
<div class="t" style="left:622px;top:482px;width:38px;text-align:right">15</div>
<div class="t" style="left:663px;top:482px;width:36px;text-align:right">2</div>
<div class="t" style="left:704px;top:482px">0</div>
<div class="t" style="left:915px;top:482px">НДСРозн10</div>
<div class="a" style="left:1072px;top:484px;width:11px;height:11px;border:1px solid #b4b4b4;background:#fff"></div>
<div class="hl" style="left:466px;top:513px;width:11px;background:#808080"></div>
<div class="hl" style="left:478px;top:513px;width:630px;background:#b8b8b8"></div>
<div class="t" style="left:480px;top:498px">FIELD21</div>
<div class="t" style="left:563px;top:498px">ftBCD</div>
<div class="t" style="left:622px;top:498px;width:38px;text-align:right">15</div>
<div class="t" style="left:663px;top:498px;width:36px;text-align:right">2</div>
<div class="t" style="left:704px;top:498px">{[ПоЗакупке18]+[НДСПоЗакупке18]}</div>
<div class="t" style="left:915px;top:498px">СуммаПостСНДС18</div>
<div class="a" style="left:1072px;top:500px;width:11px;height:11px;border:1px solid #b4b4b4;background:#fff"></div>
<div class="hl" style="left:466px;top:529px;width:11px;background:#808080"></div>
<div class="hl" style="left:478px;top:529px;width:630px;background:#b8b8b8"></div>
<div class="t" style="left:480px;top:514px">FIELD22</div>
<div class="t" style="left:563px;top:514px">ftBCD</div>
<div class="t" style="left:622px;top:514px;width:38px;text-align:right">15</div>
<div class="t" style="left:663px;top:514px;width:36px;text-align:right">2</div>
<div class="t" style="left:704px;top:514px">[НДСПоЗакупке18]</div>
<div class="t" style="left:915px;top:514px">НДСПост18</div>
<div class="a" style="left:1072px;top:516px;width:11px;height:11px;border:1px solid #b4b4b4;background:#fff"></div>
<div class="hl" style="left:466px;top:545px;width:11px;background:#808080"></div>
<div class="hl" style="left:478px;top:545px;width:630px;background:#b8b8b8"></div>
<div class="t" style="left:480px;top:530px">FIELD23</div>
<div class="t" style="left:563px;top:530px">ftBCD</div>
<div class="t" style="left:622px;top:530px;width:38px;text-align:right">15</div>
<div class="t" style="left:663px;top:530px;width:36px;text-align:right">2</div>
<div class="t" style="left:704px;top:530px">[ПоПродаже18]</div>
<div class="t" style="left:915px;top:530px">СуммаРознСНДС18</div>
<div class="a" style="left:1072px;top:532px;width:11px;height:11px;border:1px solid #b4b4b4;background:#fff"></div>
<div class="hl" style="left:466px;top:561px;width:11px;background:#808080"></div>
<div class="hl" style="left:478px;top:561px;width:630px;background:#b8b8b8"></div>
<div class="t" style="left:480px;top:546px">FIELD24</div>
<div class="t" style="left:563px;top:546px">ftBCD</div>
<div class="t" style="left:622px;top:546px;width:38px;text-align:right">15</div>
<div class="t" style="left:663px;top:546px;width:36px;text-align:right">2</div>
<div class="t" style="left:704px;top:546px">0</div>
<div class="t" style="left:915px;top:546px">НДСРозн18</div>
<div class="a" style="left:1072px;top:548px;width:11px;height:11px;border:1px solid #b4b4b4;background:#fff"></div>
<div class="hl" style="left:466px;top:577px;width:11px;background:#808080"></div>
<div class="hl" style="left:478px;top:577px;width:630px;background:#b8b8b8"></div>
<div class="t" style="left:480px;top:562px">FIELD25</div>
<div class="t" style="left:563px;top:562px">ftBCD</div>
<div class="t" style="left:622px;top:562px;width:38px;text-align:right">15</div>
<div class="t" style="left:663px;top:562px;width:36px;text-align:right">2</div>
<div class="t" style="left:704px;top:562px">[СКИДКА]</div>
<div class="t" style="left:915px;top:562px">Скидка</div>
<div class="a" style="left:1072px;top:564px;width:11px;height:11px;border:1px solid #b4b4b4;background:#fff"></div>
<div class="hl" style="left:466px;top:593px;width:11px;background:#808080"></div>
<div class="hl" style="left:478px;top:593px;width:630px;background:#b8b8b8"></div>
<div class="t" style="left:480px;top:578px">FIELD26</div>
<div class="t" style="left:563px;top:578px">ftBCD</div>
<div class="t" style="left:622px;top:578px;width:38px;text-align:right">15</div>
<div class="t" style="left:663px;top:578px;width:36px;text-align:right">2</div>
<div class="t" style="left:704px;top:578px">0</div>
<div class="t" style="left:915px;top:578px">Разукомплектация</div>
<div class="a" style="left:1072px;top:580px;width:11px;height:11px;border:1px solid #b4b4b4;background:#fff"></div>
<div class="hl" style="left:466px;top:609px;width:11px;background:#808080"></div>
<div class="hl" style="left:478px;top:609px;width:630px;background:#b8b8b8"></div>
<div class="t" style="left:480px;top:594px">FIELD27</div>
<div class="t" style="left:563px;top:594px">ftBCD</div>
<div class="t" style="left:622px;top:594px;width:38px;text-align:right">15</div>
<div class="t" style="left:663px;top:594px;width:36px;text-align:right">2</div>
<div class="t" style="left:704px;top:594px">[СКИДКА0]</div>
<div class="t" style="left:915px;top:594px">Скидка на товар НДС0</div>
<div class="a" style="left:1072px;top:596px;width:11px;height:11px;border:1px solid #b4b4b4;background:#fff"></div>
<div class="hl" style="left:466px;top:625px;width:11px;background:#808080"></div>
<div class="hl" style="left:478px;top:625px;width:630px;background:#b8b8b8"></div>
<div class="t" style="left:480px;top:610px">FIELD28</div>
<div class="t" style="left:563px;top:610px">ftBCD</div>
<div class="t" style="left:622px;top:610px;width:38px;text-align:right">15</div>
<div class="t" style="left:663px;top:610px;width:36px;text-align:right">2</div>
<div class="t" style="left:704px;top:610px">[СКИДКА10]</div>
<div class="t" style="left:915px;top:610px">Скидка на товар НДС10</div>
<div class="a" style="left:1072px;top:612px;width:11px;height:11px;border:1px solid #b4b4b4;background:#fff"></div>
<div class="hl" style="left:466px;top:641px;width:11px;background:#808080"></div>
<div class="hl" style="left:478px;top:641px;width:630px;background:#b8b8b8"></div>
<div class="t" style="left:480px;top:626px">FIELD29</div>
<div class="t" style="left:563px;top:626px">ftBCD</div>
<div class="t" style="left:622px;top:626px;width:38px;text-align:right">15</div>
<div class="t" style="left:663px;top:626px;width:36px;text-align:right">2</div>
<div class="t" style="left:704px;top:626px">[СКИДКА18]</div>
<div class="t" style="left:915px;top:626px">Скидка на товар НДС18</div>
<div class="a" style="left:1072px;top:628px;width:11px;height:11px;border:1px solid #b4b4b4;background:#fff"></div>
<div class="a" style="left:469px;top:180px;width:0;height:0;border-top:5.5px solid transparent;border-bottom:5.5px solid transparent;border-left:6px solid #000"></div>
<svg class="a" style="left:0;top:0" width="1116" height="640" viewBox="0 0 1116 640">
<defs><filter id="sh" x="-10%" y="-10%" width="130%" height="130%"><feDropShadow dx="1" dy="1.8" stdDeviation="0.9" flood-color="#303030" flood-opacity="0.35"/></filter></defs>
<g filter="url(#sh)" fill="#e03a30" stroke="#e03a30" stroke-width="0.7" stroke-linejoin="round">
<path d="M172 255.2 Q171.2 257.8 174.2 257.6 L227.5 198 L231.9 201.6 L231.7 186.3 L216.4 189.3 L220.6 192.7 Z"/>
<path d="M247.8 479 Q246 482.8 249.8 482.9 L458.3 369.3 L462 377.3 L471.3 353.2 L446 349.2 L450.9 357.6 Z"/>
</g>
</svg>
<div class="a" style="left:13px;top:263px;white-space:nowrap;font-size:30px;line-height:36px;color:#e03a30;-webkit-text-stroke:0.4px #e03a30;background:rgba(255,255,255,.88);padding:7px 2px 5px;word-spacing:-1.5px;letter-spacing:-0.12px">список видов документов</div>
<div class="a" style="left:94px;top:460px;white-space:nowrap;font-size:30px;line-height:36px;color:#e03a30;-webkit-text-stroke:0.4px #e03a30;background:rgba(255,255,255,.88);padding:7px 2px 5px">поля <span style="display:inline-block;transform:translateX(-1px) scaleY(1.1);transform-origin:50% 28px">ДБФ</span></div>
</body></html>
